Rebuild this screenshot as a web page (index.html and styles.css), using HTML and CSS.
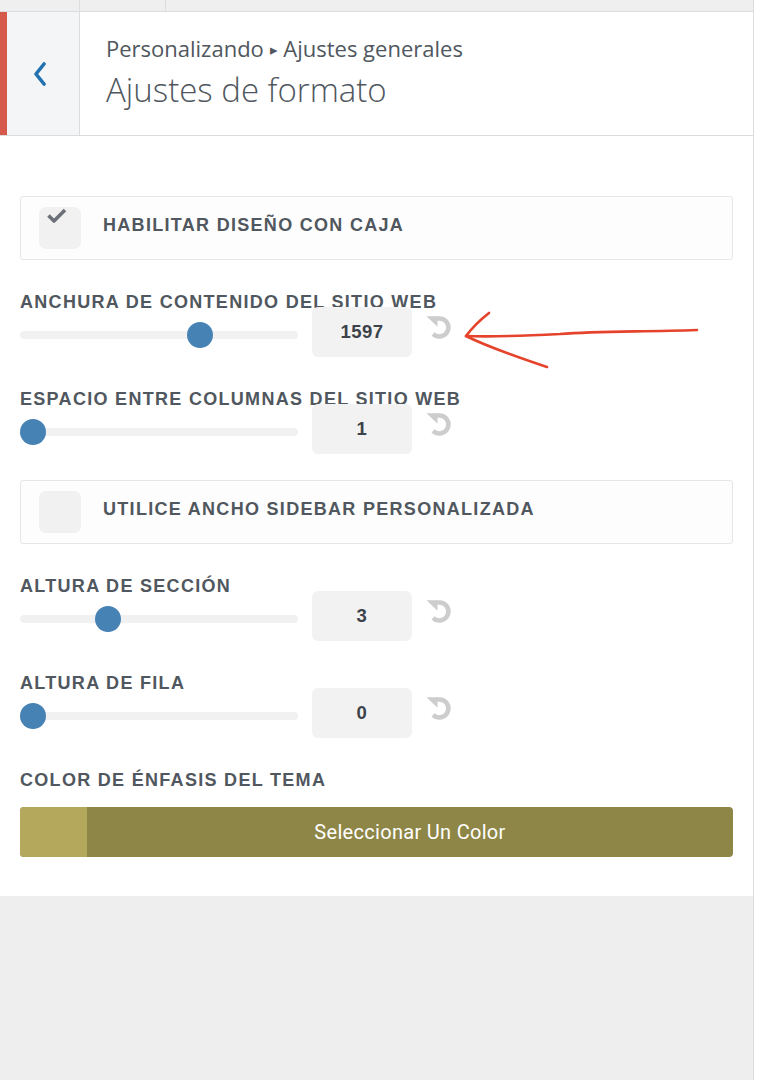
FILE: index.html
```html
<!DOCTYPE html>
<html lang="es">
<head>
<meta charset="utf-8">
<title>Ajustes de formato</title>
<link rel="stylesheet" href="styles.css">
</head>
<body>
<div class="page">
  <div class="panel">
    <div class="topbar"><div class="tab tab-a"></div><div class="tab tab-b"></div></div>
    <div class="header">
      <div class="back">
        <svg width="14" height="24" viewBox="0 0 14 24"><path d="M11 2 L3 12 L11 22" fill="none" stroke="#2271b1" stroke-width="3.6" stroke-linecap="round" stroke-linejoin="round"/></svg>
      </div>
      <div class="titles">
        <div class="crumb">Personalizando <span class="tri">&#9656;</span> Ajustes generales</div>
        <div class="title">Ajustes de formato</div>
      </div>
    </div>
    <div class="content">
      <div class="control checkbox">
        <div class="box"><svg class="check" width="22" height="16" viewBox="0 0 22 16"><path d="M2.5 7.5 L8 13 L19 2" fill="none" stroke="#6c7078" stroke-width="3.6" stroke-linejoin="round"/></svg></div>
        <span class="cb-label">HABILITAR DISEÑO CON CAJA</span>
      </div>

      <div class="control slider">
        <div class="label">ANCHURA DE CONTENIDO DEL SITIO WEB</div>
        <div class="row">
          <div class="track"><div class="rail"><span class="thumb" style="left:60.1%"></span></div></div>
          <div class="num">1597</div>
          <svg class="reset" width="28" height="28" viewBox="0 0 28 28"><path d="M11 4.5 H14.5 A9 9 0 1 1 8.1 19.9" fill="none" stroke="#cdcdcd" stroke-width="4.6"/><path d="M1.5 2.2 L12.5 2.2 L12.5 12.8 Z" fill="#cdcdcd"/></svg>
        </div>
      </div>

      <div class="control slider">
        <div class="label">ESPACIO ENTRE COLUMNAS DEL SITIO WEB</div>
        <div class="row">
          <div class="track"><div class="rail"><span class="thumb" style="left:0%"></span></div></div>
          <div class="num">1</div>
          <svg class="reset" width="28" height="28" viewBox="0 0 28 28"><path d="M11 4.5 H14.5 A9 9 0 1 1 8.1 19.9" fill="none" stroke="#cdcdcd" stroke-width="4.6"/><path d="M1.5 2.2 L12.5 2.2 L12.5 12.8 Z" fill="#cdcdcd"/></svg>
        </div>
      </div>

      <div class="control checkbox">
        <div class="box"></div>
        <span class="cb-label">UTILICE ANCHO SIDEBAR PERSONALIZADA</span>
      </div>

      <div class="control slider">
        <div class="label">ALTURA DE SECCIÓN</div>
        <div class="row">
          <div class="track"><div class="rail"><span class="thumb" style="left:27%"></span></div></div>
          <div class="num">3</div>
          <svg class="reset" width="28" height="28" viewBox="0 0 28 28"><path d="M11 4.5 H14.5 A9 9 0 1 1 8.1 19.9" fill="none" stroke="#cdcdcd" stroke-width="4.6"/><path d="M1.5 2.2 L12.5 2.2 L12.5 12.8 Z" fill="#cdcdcd"/></svg>
        </div>
      </div>

      <div class="control slider">
        <div class="label">ALTURA DE FILA</div>
        <div class="row">
          <div class="track"><div class="rail"><span class="thumb" style="left:0%"></span></div></div>
          <div class="num">0</div>
          <svg class="reset" width="28" height="28" viewBox="0 0 28 28"><path d="M11 4.5 H14.5 A9 9 0 1 1 8.1 19.9" fill="none" stroke="#cdcdcd" stroke-width="4.6"/><path d="M1.5 2.2 L12.5 2.2 L12.5 12.8 Z" fill="#cdcdcd"/></svg>
        </div>
      </div>

      <div class="control color">
        <div class="label">COLOR DE ÉNFASIS DEL TEMA</div>
        <div class="color-btn"><span class="swatch"></span><span class="color-text">Seleccionar Un Color</span></div>
      </div>
    </div>
    <div class="rest"></div>
  </div>
  <div class="side"></div>
</div>
<svg class="annotation" width="771" height="1080" viewBox="0 0 771 1080">
  <path d="M697 330 C640 332 600 331 560 334 C520 336 490 337 466 336" fill="none" stroke="#e5432b" stroke-width="2.6" stroke-linecap="round"/>
  <path d="M489 313 C480 320 472 328 466 336 C490 348 520 358 547 367" fill="none" stroke="#e5432b" stroke-width="2.6" stroke-linecap="round" stroke-linejoin="round"/>
</svg>
</body>
</html>
```
FILE: styles.css
```css
* { box-sizing: border-box; }
body {
  margin: 0;
  background: #fff;
  font-family: "Liberation Sans", Arial, sans-serif;
  position: relative;
}
.page {
  display: flex;
  min-height: 1080px;
}
.panel {
  width: 754px;
  border-right: 1px solid #dcdcde;
  background: #eeeeee;
  display: flex;
  flex-direction: column;
}
.side { flex: 1; background: #fff; }
.topbar {
  height: 12px;
  background: #efefef;
  border-bottom: 1px solid #dcdcde;
  display: flex;
}
.tab { border-right: 1px solid #dcdcde; }
.tab-a { width: 80px; }
.tab-b { width: 86px; }
.header {
  display: flex;
  height: 124px;
  background: #fff;
  border-bottom: 1px solid #dcdcde;
}
.back {
  width: 80px;
  background: #f3f5f6;
  border-left: 7px solid #d65a4b;
  border-right: 1px solid #dcdcde;
  display: flex;
  align-items: center;
  justify-content: center;
  padding-right: 6px;
}
.titles {
  padding-left: 26px;
  padding-top: 22px;
  display: flex;
  flex-direction: column;
  color: #50575e;
  font-family: "Open Sans", sans-serif;
}
.crumb {
  font-size: 22px;
  line-height: 28px;
}
.tri { font-size: 15px; position: relative; top: -2px; }
.title {
  font-size: 33px;
  font-weight: 300;
  line-height: 40px;
  margin-top: 5px;
}
.content {
  background: #fff;
  padding: 60px 20px 39px;
  display: flex;
  flex-direction: column;
  gap: 26px;
}
.checkbox {
  height: 64px;
  border: 1px solid #e6e6e6;
  border-radius: 3px;
  background: #fdfdfd;
  display: flex;
  align-items: center;
  padding: 0 18px;
}
.box {
  width: 42px;
  height: 42px;
  background: #f1f1f1;
  border-radius: 7px;
  position: relative;
  flex: none;
}
.check { position: absolute; left: 7px; top: 1px; }
.cb-label, .label {
  font-size: 18px;
  font-weight: 700;
  color: #50575e;
  letter-spacing: 1.3px;
  white-space: nowrap;
}
.cb-label { margin-left: 22px; padding-bottom: 6px; }
.label {
  line-height: 20px;
  padding-top: 6px;
}
.slider .row {
  margin-top: -5px;
  height: 50px;
  display: flex;
  align-items: flex-start;
}
.track {
  width: 278px;
  padding-top: 24px;
}
.rail {
  height: 8px;
  border-radius: 4px;
  background: #f1f1f1;
  position: relative;
}
.thumb {
  position: absolute;
  top: -9px;
  width: 26px;
  height: 26px;
  border-radius: 50%;
  background: #4682b4;
}
.num {
  width: 100px;
  height: 50px;
  margin-left: 14px;
  background: #f2f2f2;
  border-radius: 6px;
  display: flex;
  align-items: center;
  justify-content: center;
  font-size: 18.5px;
  letter-spacing: 0.5px;
  font-weight: 700;
  color: #3c434a;
}
.reset { margin-left: 13px; margin-top: 7px; }
.color .label { margin-bottom: 17px; }
.color-btn {
  height: 50px;
  border-radius: 4px;
  background: #8e8647;
  display: flex;
  overflow: hidden;
}
.swatch { width: 67px; background: #b3a85c; }
.color-text {
  flex: 1;
  display: flex;
  align-items: center;
  justify-content: center;
  color: #fff;
  font-size: 20px;
  letter-spacing: 0.3px;
  font-family: "Roboto", "Liberation Sans", sans-serif;
}
.rest { flex: 1; background: #eeeeee; }
.annotation {
  position: absolute;
  left: 0;
  top: 0;
  pointer-events: none;
}
```
